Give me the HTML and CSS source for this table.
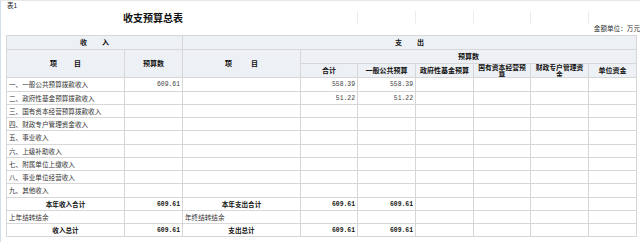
FILE: index.html
```html
<!DOCTYPE html>
<html lang="zh-CN">
<head>
<meta charset="utf-8">
<title>收支预算总表</title>
<link rel="stylesheet" href="styles.css">
</head>
<body>
<div class="sheet">
  <div class="caption">表1</div>
  <div class="title-row">
    <div class="title">收支预算总表</div>
    <div class="gc"></div>
    <div class="gc gl"></div>
    <div class="gc gl"></div>
    <div class="gc gl"></div>
    <div class="gc gl"></div>
    <div class="gc gl"></div>
  </div>
  <div class="unit">金额单位：万元</div>
  <table class="budget">
    <colgroup>
      <col class="c-wide"><col class="c-num"><col class="c-wide">
      <col class="c-n57"><col class="c-num"><col class="c-num"><col class="c-n57"><col class="c-num"><col class="c-last">
    </colgroup>
    <thead>
      <tr class="h1">
        <th colspan="2">收<span class="gap"></span>入</th>
        <th colspan="7">支<span class="gap"></span>出</th>
      </tr>
      <tr class="h2">
        <th rowspan="2">项<span class="gap2"></span>目</th>
        <th rowspan="2">预算数</th>
        <th rowspan="2">项<span class="gap3"></span>目</th>
        <th colspan="6">预算数</th>
      </tr>
      <tr class="h3">
        <th>合计</th>
        <th>一般公共预算</th>
        <th>政府性基金预算</th>
        <th class="wrap">国有资本经营预<br>算</th>
        <th class="wrap">财政专户管理资<br>金</th>
        <th>单位资金</th>
      </tr>
    </thead>
    <tbody>
      <tr class="r14"><td>一、一般公共预算拨款收入</td><td class="num">609.61</td><td></td><td class="num">558.39</td><td class="num">558.39</td><td></td><td></td><td></td><td></td></tr>
      <tr class="r13"><td>二、政府性基金预算拨款收入</td><td></td><td></td><td class="num">51.22</td><td class="num">51.22</td><td></td><td></td><td></td><td></td></tr>
      <tr class="r13"><td>三、国有资本经营预算拨款收入</td><td></td><td></td><td></td><td></td><td></td><td></td><td></td><td></td></tr>
      <tr class="r13"><td>四、财政专户管理资金收入</td><td></td><td></td><td></td><td></td><td></td><td></td><td></td><td></td></tr>
      <tr class="r14"><td>五、事业收入</td><td></td><td></td><td></td><td></td><td></td><td></td><td></td><td></td></tr>
      <tr class="r13"><td>六、上级补助收入</td><td></td><td></td><td></td><td></td><td></td><td></td><td></td><td></td></tr>
      <tr class="r13"><td>七、附属单位上缴收入</td><td></td><td></td><td></td><td></td><td></td><td></td><td></td><td></td></tr>
      <tr class="r13"><td>八、事业单位经营收入</td><td></td><td></td><td></td><td></td><td></td><td></td><td></td><td></td></tr>
      <tr class="r14"><td>九、其他收入</td><td></td><td></td><td></td><td></td><td></td><td></td><td></td><td></td></tr>
      <tr class="r13 total"><td class="ctr">本年收入合计</td><td class="num">609.61</td><td class="ctr">本年支出合计</td><td class="num">609.61</td><td class="num">609.61</td><td></td><td></td><td></td><td></td></tr>
      <tr class="r13"><td>上年结转结余</td><td></td><td>年终结转结余</td><td></td><td></td><td></td><td></td><td></td><td></td></tr>
      <tr class="r13 total"><td class="ctr">收入总计</td><td class="num">609.61</td><td class="ctr">支出总计</td><td class="num">609.61</td><td class="num">609.61</td><td></td><td></td><td></td><td></td></tr>
    </tbody>
  </table>
</div>
</body>
</html>
```
FILE: styles.css
```css
html, body {
  margin: 0;
  padding: 0;
  background: #ffffff;
}
body {
  font-family: "Noto Sans CJK SC", "Noto Sans", sans-serif;
  color: #2a2a2a;
  width: 640px;
  overflow: hidden;
}
.sheet {
  border-left: 1px solid #d3dfee;
  border-top: 1px solid #e8e8e8;
  padding-left: 5px;
  height: 241px;
}
.caption {
  height: 9px;
  line-height: 9px;
  font-size: 6.5px;
  padding-left: 1px;
  color: #222;
}
.title-row {
  display: grid;
  grid-template-columns: 294px 57px 58px 58px 57px 58px 48px;
  height: 15px;
}
.title {
  font-size: 10px;
  font-weight: 700;
  line-height: 15px;
  text-align: center;
  color: #111;
}
.gl {
  border-left: 1px solid #ececec;
  margin: 1px 0;
}
.unit {
  height: 10px;
  font-size: 6.6px;
  line-height: 6px;
  text-align: right;
  color: #333;
  box-sizing: border-box;
}
.budget {
  border-collapse: collapse;
  table-layout: fixed;
  width: 631px;
  font-size: 6.6px;
}
.c-wide { width: 118px; }
.c-num { width: 58px; }
.c-n57 { width: 57px; }
.c-last { width: 48px; }
.budget th,
.budget td {
  border: 1px solid #d7d7d7;
  padding: 0 2px;
  white-space: nowrap;
  overflow: hidden;
  line-height: 9px;
}
.budget th {
  background: #edf0f4;
  font-weight: 700;
  font-size: 7px;
  color: #111;
  text-align: center;
}
.h1, .h2, .h3 { height: 14px; }
.h3 th { line-height: 6.5px; }
.budget th.wrap {
  padding: 0 1px;
  font-size: 6.8px;
  line-height: 6.5px;
}
.gap { display: inline-block; width: 15px; }
.gap2 { display: inline-block; width: 17px; }
.gap3 { display: inline-block; width: 19px; }
.r13 { height: 13px; }
.r14 { height: 14px; }
.budget td { text-align: left; color: #333; }
.budget td.num {
  text-align: right;
  font-family: "Liberation Mono", "DejaVu Sans Mono", monospace;
  font-size: 6.4px;
  color: #444;
}
.total td { font-weight: 700; color: #111; }
.total td.num { color: #111; }
.budget td.ctr { text-align: center; }
```
